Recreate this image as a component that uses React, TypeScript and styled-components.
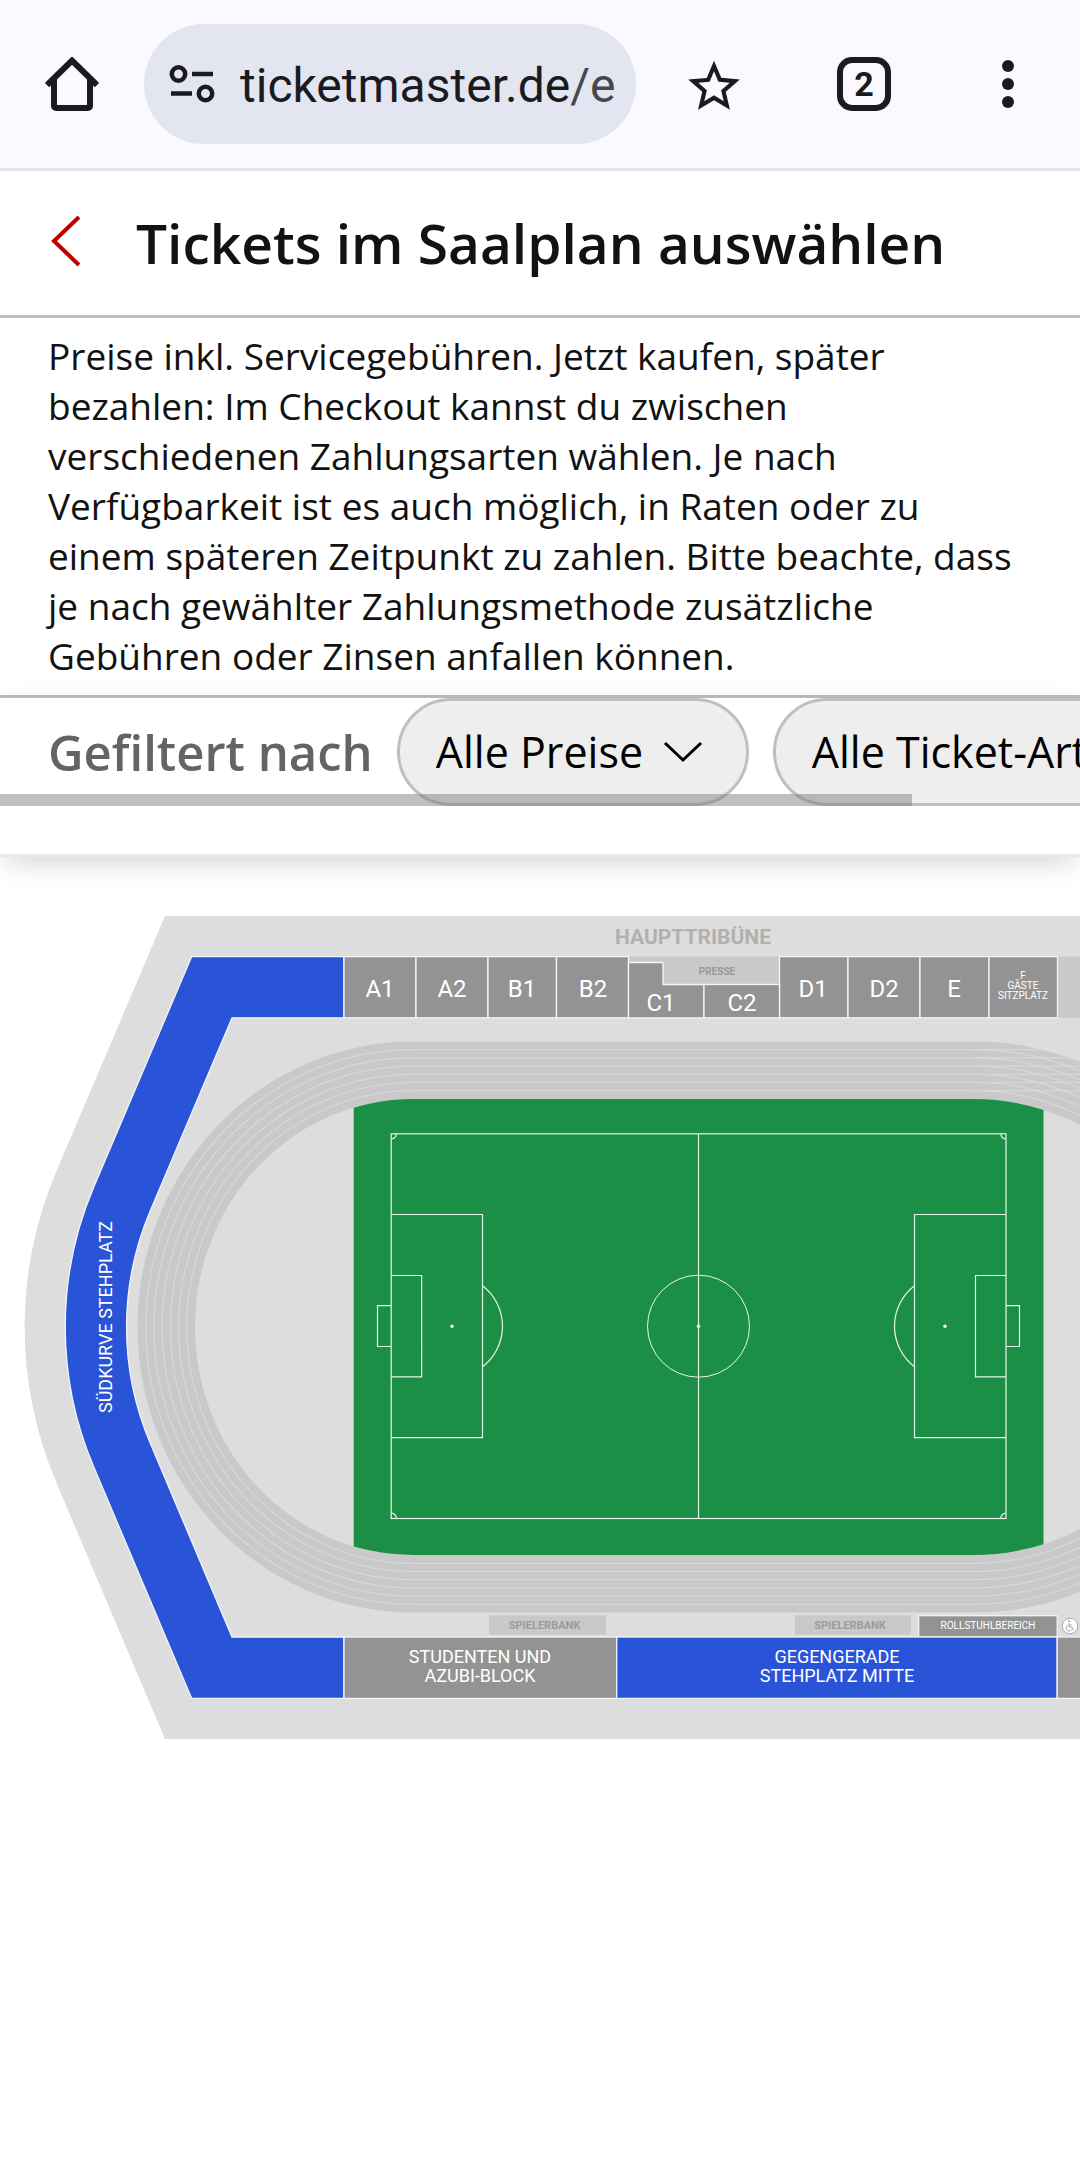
import React from 'react';
import styled, { createGlobalStyle } from 'styled-components';

const GlobalStyle = createGlobalStyle`
  *, *::before, *::after { box-sizing: border-box; }
  html, body { margin: 0; padding: 0; background: #fff; }
  body {
    font-family: "Open Sans", Lato, "Liberation Sans", sans-serif;
    color: #121212;
    overflow-x: hidden;
  }
  button, select { font: inherit; color: inherit; }
`;

const Page = styled.div`
  display: flex;
  flex-direction: column;
  min-height: 100vh;
  background: #fff;
`;

/* ---------- Browser bar ---------- */

const BrowserBar = styled.header`
  display: flex;
  align-items: center;
  height: 171px;
  padding-bottom: 3px;
  background: #faf9ff;
  box-shadow: inset 0 -3px 0 #e2e1ec;
  font-family: Roboto, "Liberation Sans", sans-serif;
  color: #1b1b1f;
`;

const BarButton = styled.button<{ $width: number }>`
  display: flex;
  flex: none;
  align-items: center;
  justify-content: center;
  width: ${(p) => p.$width}px;
  height: 120px;
  padding: 0;
  border: 0;
  background: none;
`;

const AddressPill = styled.button`
  display: flex;
  flex: 1;
  align-items: center;
  gap: 24px;
  min-width: 0;
  height: 120px;
  padding: 4px 16px 0 24px;
  border: 0;
  border-radius: 60px;
  background: #e3e6f0;
  text-align: left;
`;

const Address = styled.span`
  flex: 1;
  overflow: hidden;
  font-size: 48px;
  line-height: 60px;
  white-space: nowrap;
`;

const AddressPath = styled.span`
  color: #46484f;
`;

const TabCount = styled.span`
  display: flex;
  align-items: center;
  justify-content: center;
  width: 54px;
  height: 54px;
  border: 6px solid #1b1b1f;
  border-radius: 15px;
  font-size: 34px;
  font-weight: 700;
  line-height: 36px;
`;

/* ---------- Page header ---------- */

const TitleBar = styled.div`
  display: flex;
  align-items: center;
  height: 147px;
  padding: 0 48px;
  border-bottom: 3px solid #bfbfbf;
`;

const BackLink = styled.a`
  display: flex;
  flex: none;
  width: 88px;
  color: #c00000;
`;

const Title = styled.h1`
  margin: 0;
  font-size: 55px;
  font-weight: 600;
  line-height: 72px;
`;

const Notice = styled.p`
  margin: 0;
  padding: 13px 48px 14px;
  font-size: 37px;
  line-height: 50px;
`;

/* ---------- Filters ---------- */

const FilterBar = styled.section`
  position: relative;
  z-index: 1;
  padding-bottom: 48px;
  border-top: 3px solid #b8b8b8;
  border-bottom: 3px solid #e9e9e9;
  background: #fff;
  box-shadow: 0 9px 27px -6px rgba(0, 0, 0, 0.2);
`;

const FilterTrack = styled.div`
  position: relative;
  display: flex;
  align-items: center;
  gap: 24px;
  padding-left: 48px;
  overflow: hidden;
`;

const FilterHeading = styled.h2`
  flex: none;
  margin: 0;
  font-size: 49px;
  font-weight: 600;
  line-height: 60px;
  color: #646464;
`;

const FilterPill = styled.div`
  position: relative;
  flex: none;
  color: #000;
`;

const FilterSelect = styled.select`
  display: block;
  height: 108px;
  padding: 0 102px 0 36px;
  border: 3px solid #bfbfbf;
  border-radius: 54px;
  background: #eee;
  appearance: none;
  font-size: 43px;
  line-height: 54px;
`;

const PillChevron = styled.svg`
  position: absolute;
  top: 42px;
  right: 45px;
  pointer-events: none;
`;

const ScrollThumb = styled.div`
  position: absolute;
  bottom: 0;
  left: 0;
  width: 84.4%;
  height: 12px;
  background: rgba(128, 128, 128, 0.5);
`;

function Filter({ label, name }: { label: string; name: string }) {
  return (
    <FilterPill>
      <FilterSelect aria-label={name} defaultValue={label}>
        <option>{label}</option>
      </FilterSelect>
      <PillChevron width="42" height="24" viewBox="0 0 42 24" fill="none" stroke="currentColor" strokeWidth="3" aria-hidden="true">
        <path d="M3 3l18 17L39 3" />
      </PillChevron>
    </FilterPill>
  );
}

/* ---------- Seat map ---------- */

const MapArea = styled.main`
  flex: 1;
`;

const SeatMap = styled.svg`
  display: block;
  width: 100%;
  height: auto;
  font-family: Roboto, "Liberation Sans", sans-serif;
`;

const BlockName = styled.text`
  font-size: 24px;
  fill: #fff;
  text-anchor: middle;
`;

const StandName = styled.text`
  font-size: 18px;
  fill: #fff;
  text-anchor: middle;
`;

const SmallName = styled.text`
  font-size: 10px;
  fill: #fff;
  text-anchor: middle;
`;

const MutedName = styled.text<{ $size: number; $fill: string }>`
  font-size: ${(p) => p.$size}px;
  font-weight: 700;
  fill: ${(p) => p.$fill};
  text-anchor: middle;
`;

const FREE = '#2a54d8';
const SOLD = '#939393';
const MUTED = '#c9c9c9';

const seatBlocks = [
  { name: 'A1', x: 344, width: 72, label: 380 },
  { name: 'A2', x: 416, width: 72, label: 452 },
  { name: 'B1', x: 488, width: 68.5, label: 522 },
  { name: 'B2', x: 556.5, width: 72, label: 593 },
  { name: 'D1', x: 779.5, width: 68.5, label: 813 },
  { name: 'D2', x: 848, width: 72, label: 884 },
  { name: 'E', x: 920, width: 69, label: 954 },
];

// Stadium-shaped outline of the running track at a given radius.
function trackPath(r: number) {
  const rx = r - 10;
  return `M413 ${1327 - r}H974A${r} ${r} 0 0 1 974 ${1327 + r}H413A${rx} ${r} 0 0 1 413 ${1327 - r}Z`;
}

const lanes = [1, 2, 3, 4, 5, 6].map((n) => 285.5 - n * 8.2);

function StadiumMap() {
  return (
    <SeatMap viewBox="0 857 1080 924" role="img" aria-label="Saalplan">
      <defs>
        <clipPath id="infield">
          <path d={trackPath(228)} />
        </clipPath>
        <clipPath id="track">
          <path d={trackPath(285.5)} />
        </clipPath>
      </defs>

      <path d="M1100 916H165L56.5 1171A398 398 0 0 0 56.5 1483L165 1739H1100Z" fill="#ddd" />

      <path d={trackPath(285.5)} fill={MUTED} />
      <g fill="none" stroke="#d8d8d8" strokeWidth="1.2">
        {lanes.map((r) => (
          <path key={r} d={trackPath(r)} />
        ))}
        {lanes.map((r) => (
          <path key={r} d={`M974 ${1327 - r}H1100`} clipPath="url(#track)" />
        ))}
      </g>
      <path d={trackPath(228)} fill="#ddd" />
      <rect x="353.7" y="1090" width="689.8" height="480" fill="#1c8f46" clipPath="url(#infield)" />

      <g fill="none" stroke="#e4f6e8" strokeWidth="1.2">
        <rect x="391.2" y="1133.8" width="614.8" height="384.7" />
        <path d="M698.5 1133.8V1518.5" />
        <circle cx="698.5" cy="1326.2" r="51" strokeWidth="1" />
        <path d="M391 1214.5H482.5V1437.7H391M391 1275.5H421.7V1376.8H391M391 1305.7H377.5V1346.5H391" />
        <path d="M1006 1214.5H914.5V1437.7H1006M1006 1275.5H975.5V1376.8H1006M1006 1305.7H1019.5V1346.5H1006" />
        <path d="M482.5 1285.7A51 51 0 0 1 482.5 1366.7M914.5 1285.7A51 51 0 0 0 914.5 1366.7" />
        <path d="M396.5 1133.8A5.3 5.3 0 0 1 391.2 1139M1000.7 1133.8A5.3 5.3 0 0 0 1006 1139M396.5 1518.5A5.3 5.3 0 0 0 391.2 1513.2M1000.7 1518.5A5.3 5.3 0 0 1 1006 1513.2" />
      </g>
      <g fill="#e4f6e8">
        <circle cx="452" cy="1326.2" r="1.8" />
        <circle cx="698.5" cy="1326.2" r="1.8" />
        <circle cx="945" cy="1326.2" r="1.8" />
      </g>

      <rect x="628.5" y="956.6" width="151" height="27.9" fill={MUTED} />
      <rect x="1057.5" y="956.6" width="30" height="61.2" fill={MUTED} />
      <rect x="489" y="1615.3" width="117" height="19.4" fill={MUTED} />
      <rect x="795" y="1615.3" width="116" height="19.4" fill={MUTED} />

      <g stroke="#f4f4f6" strokeWidth="1.3">
        <path
          d="M344 956.6H191.7L93.8 1187A357.5 357.5 0 0 0 93.8 1467L191.7 1698.4H344V1637H232L150.4 1443.5A296.5 296.5 0 0 1 150.4 1210.5L232 1017.8H344Z"
          fill={FREE}
        />
        {seatBlocks.map((b) => (
          <rect key={b.name} x={b.x} y="956.6" width={b.width} height="61.2" fill={SOLD} />
        ))}
        <path d="M628.5 962.5H663V984.5H704V1017.8H628.5Z" fill={SOLD} />
        <rect x="704" y="984.5" width="75.5" height="33.3" fill={SOLD} />
        <rect x="989" y="956.6" width="68.5" height="61.2" fill={SOLD} />
        <rect x="918.7" y="1615.7" width="138.5" height="21.3" fill={SOLD} />
        <rect x="344" y="1637" width="272.7" height="61.4" fill={SOLD} />
        <rect x="616.7" y="1637" width="440.5" height="61.4" fill={FREE} />
        <rect x="1057.2" y="1637" width="30" height="61.4" fill={SOLD} />
      </g>

      {seatBlocks.map((b) => (
        <BlockName key={b.name} x={b.label} y="997">{b.name}</BlockName>
      ))}
      <BlockName x="661" y="1011">C1</BlockName>
      <BlockName x="742" y="1011">C2</BlockName>
      <SmallName x="1023" y="979">F</SmallName>
      <SmallName x="1023" y="989">GÄSTE</SmallName>
      <SmallName x="1023" y="999">SITZPLATZ</SmallName>

      <MutedName x="693" y="944" $size={21} $fill="#b0b0b0">HAUPTTRIBÜNE</MutedName>
      <MutedName x="717" y="975" $size={10} $fill="#999">PRESSE</MutedName>
      <MutedName x="544.5" y="1629" $size={11} $fill="#9b9b9b">SPIELERBANK</MutedName>
      <MutedName x="850" y="1629" $size={11} $fill="#9b9b9b">SPIELERBANK</MutedName>
      <SmallName x="988" y="1629">ROLLSTUHLBEREICH</SmallName>

      <StandName x="480" y="1663">STUDENTEN UND</StandName>
      <StandName x="480" y="1682">AZUBI-BLOCK</StandName>
      <StandName x="837" y="1663">GEGENGERADE</StandName>
      <StandName x="837" y="1682">STEHPLATZ MITTE</StandName>
      <StandName transform="translate(112 1317) rotate(-90)">SÜDKURVE STEHPLATZ</StandName>

      <g fill="none" stroke="#a8a8a8" strokeWidth="1">
        <circle cx="1070" cy="1626" r="7.8" fill="#fff" />
        <circle cx="1069" cy="1621.3" r="0.7" fill="#a8a8a8" />
        <path d="M1069 1623V1627.2H1072.2L1073.5 1630.3M1069 1625H1071.7M1067.8 1625.3A3 3 0 1 0 1071.7 1629.3" />
      </g>
    </SeatMap>
  );
}

export default function App() {
  return (
    <Page>
      <GlobalStyle />
      <BrowserBar>
        <BarButton $width={144} aria-label="Startseite">
          <svg width="54" height="54" viewBox="0 0 54 54" fill="none" stroke="currentColor" strokeWidth="6" strokeLinejoin="round">
            <path d="M9 22V49a2 2 0 0 0 2 2H43a2 2 0 0 0 2-2V22" />
            <path d="M2 28L27 3.5L52 28" strokeLinejoin="miter" />
          </svg>
        </BarButton>
        <AddressPill>
          <svg width="48" height="42" viewBox="0 2 48 42" fill="none" stroke="currentColor" strokeWidth="4.5">
            <circle cx="10.5" cy="11" r="6.7" />
            <circle cx="37.5" cy="30.5" r="6.7" />
            <path d="M24 11H45M3 30.5H24" />
          </svg>
          <Address>
            ticketmaster.de<AddressPath>/e</AddressPath>
          </Address>
        </AddressPill>
        <BarButton $width={156} aria-label="Lesezeichen">
          <svg width="62" height="62" viewBox="0 -1 24 24" fill="currentColor">
            <path d="M22 9.24l-7.19-.62L12 2 9.19 8.63 2 9.24l5.46 4.73L5.82 21 12 17.27 18.18 21l-1.63-7.03L22 9.24zM12 15.4l-3.76 2.27 1-4.28-3.32-2.88 4.38-.38L12 6.1l1.71 4.04 4.38.38-3.32 2.88 1 4.28L12 15.4z" />
          </svg>
        </BarButton>
        <BarButton $width={144} aria-label="Tabs">
          <TabCount>2</TabCount>
        </BarButton>
        <BarButton $width={144} aria-label="Menü">
          <svg width="12" height="48" viewBox="0 0 12 48" fill="currentColor">
            <circle cx="6" cy="6" r="6" />
            <circle cx="6" cy="24" r="6" />
            <circle cx="6" cy="42" r="6" />
          </svg>
        </BarButton>
      </BrowserBar>

      <TitleBar>
        <BackLink href="#" aria-label="Zurück">
          <svg width="36" height="54" viewBox="0 1 36 54" fill="none" stroke="currentColor" strokeWidth="4">
            <path d="M31 2L6 26L31 50" />
          </svg>
        </BackLink>
        <Title>Tickets im Saalplan auswählen</Title>
      </TitleBar>

      <Notice>
        Preise inkl. Servicegebühren. Jetzt kaufen, später bezahlen: Im Checkout kannst du zwischen
        verschiedenen Zahlungsarten wählen. Je nach Verfügbarkeit ist es auch möglich, in Raten oder zu
        einem späteren Zeitpunkt zu zahlen. Bitte beachte, dass je nach gewählter Zahlungsmethode
        zusätzliche Gebühren oder Zinsen anfallen können.
      </Notice>

      <FilterBar>
        <FilterTrack>
          <FilterHeading>Gefiltert nach</FilterHeading>
          <Filter name="Preise" label="Alle Preise" />
          <Filter name="Ticket-Arten" label="Alle Ticket-Arten" />
          <ScrollThumb />
        </FilterTrack>
      </FilterBar>

      <MapArea>
        <StadiumMap />
      </MapArea>
    </Page>
  );
}
